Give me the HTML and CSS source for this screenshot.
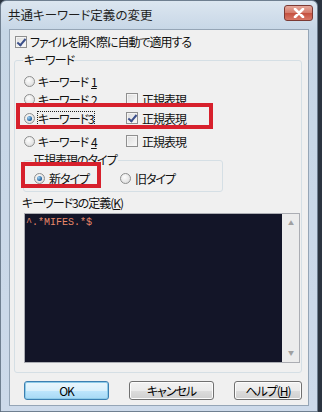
FILE: index.html
```html
<!DOCTYPE html>
<html lang="ja">
<head>
  <meta charset="UTF-8" />
  <title>共通キーワード定義の変更</title>
  <link rel="stylesheet" href="styles.css">
</head>
<body>
  <div class="window">
    <div class="titlebar">
      <span class="title">共通キーワード定義の変更</span>
      <span class="close-btn">
        <svg width="12" height="10" viewBox="0 0 12 10"><path d="M2 1 L10 9 M10 1 L2 9" stroke="#fff" stroke-width="2.6" stroke-linecap="round"/></svg>
      </span>
    </div>

    <div class="client">
      <label class="check-row">
        <span class="checkbox checked"></span>ファイルを開く際に自動で適用する
      </label>

      <fieldset class="group kw-group">
        <legend>キーワード</legend>

        <div class="kw-rows">
          <div class="kw-row">
            <span class="radio-item"><span class="radio"></span>キーワード<u>1</u></span>
          </div>
          <div class="kw-row">
            <span class="radio-item"><span class="radio"></span>キーワード<u>2</u></span>
            <span class="check-item"><span class="checkbox"></span>正規表現</span>
          </div>
          <div class="kw-row row3">
            <span class="radio-item"><span class="radio on"></span><span class="focus">キーワード<u>3</u></span></span>
            <span class="check-item"><span class="checkbox checked"></span>正規表現</span>
            <span class="mark mark-row"></span>
          </div>
          <div class="kw-row row4">
            <span class="radio-item"><span class="radio"></span>キーワード<u>4</u></span>
            <span class="check-item"><span class="checkbox"></span>正規表現</span>
          </div>
        </div>

        <fieldset class="group type-group">
          <legend>正規表現のタイプ</legend>
          <div class="type-row">
            <span class="radio-item new-type"><span class="radio on"></span>新タイプ<span class="mark mark-type"></span></span>
            <span class="radio-item old-type"><span class="radio"></span>旧タイプ</span>
          </div>
        </fieldset>

        <div class="def-label">キーワード3の定義(<u>K</u>)</div>
        <div class="editbox">
          <div class="edit-text">^.*MIFES.*$</div>
          <div class="scrollbar">
            <span class="arrow">&#9650;</span>
            <span class="arrow">&#9660;</span>
          </div>
        </div>
      </fieldset>

      <div class="buttons">
        <button class="btn btn-default">OK</button>
        <button class="btn">キャンセル</button>
        <button class="btn btn-help">ヘルプ(<u>H</u>)</button>
      </div>
    </div>
  </div>
</body>
</html>
```

FILE: styles.css
```css
* {
  box-sizing: border-box;
  margin: 0;
  padding: 0;
}

html, body {
  width: 322px;
  height: 412px;
  overflow: hidden;
  background: #2b3440;
}

body {
  font-family: "Noto Sans CJK JP", sans-serif;
  font-size: 12px;
  font-feature-settings: "palt";
  color: #000;
}

u {
  text-decoration: underline;
  text-underline-offset: 1px;
}

/* window frame */
.window {
  width: 318px;
  height: 412px;
  padding: 0 8px 5px 8px;
  background: linear-gradient(#dce6f0, #c6d6e6 30px, #cddaea);
  border: 1px solid #6f7f90;
  border-radius: 6px 6px 0 0;
  display: flex;
  flex-direction: column;
}

.titlebar {
  height: 28px;
  display: flex;
  align-items: center;
  justify-content: space-between;
}

.title {
  font-size: 12.5px;
  color: #1e1e1e;
  margin-left: -1px;
  margin-top: -1px;
}

.close-btn {
  width: 29px;
  height: 16px;
  margin-right: -4px;
  margin-top: -4px;
  border: 1px solid #7b3a34;
  border-radius: 3px;
  background: linear-gradient(#e6a99c, #d47a6a 50%, #c4503f 51%, #d87766);
  display: flex;
  align-items: center;
  justify-content: center;
}

.client {
  flex: 1;
  background: #f0f0f0;
  border: 1px solid #95a5b6;
  padding: 5px 0 0 4px;
  letter-spacing: -1px;
  color: #111;
}

/* checkbox / radio */
.checkbox {
  display: inline-block;
  width: 12px;
  height: 12px;
  border: 1px solid #8f8f8f;
  background: linear-gradient(135deg, #dcdcdc, #fafafa);
  box-shadow: inset 0 0 0 1px #f4f4f4;
  position: relative;
  flex-shrink: 0;
}

.checkbox.checked::after {
  content: "";
  position: absolute;
  left: 3px;
  top: 0px;
  width: 3px;
  height: 7px;
  border: solid #3b4f8a;
  border-width: 0 2px 2px 0;
  transform: rotate(40deg);
}

.radio {
  display: inline-block;
  width: 11px;
  height: 11px;
  border-radius: 50%;
  border: 1px solid #8e8f8f;
  background: radial-gradient(circle at 40% 35%, #fdfdfd, #d6d6d6);
  position: relative;
  flex-shrink: 0;
}

.radio.on::after {
  content: "";
  position: absolute;
  left: 2px;
  top: 2px;
  width: 5px;
  height: 5px;
  border-radius: 50%;
  background: radial-gradient(circle at 35% 35%, #9fd3f5, #1d5c9a 70%, #0d3a6c);
}

.check-row {
  display: flex;
  align-items: center;
  gap: 3px;
  height: 13px;
  line-height: 13px;
  margin-left: 1px;
}

/* group boxes */
.group {
  border: 1px solid #d5dfe5;
  border-radius: 3px;
}

.group legend {
  padding: 0 1px;
  line-height: 14px;
  height: 14px;
}

.kw-group {
  margin-top: 5px;
  width: 288px;
  height: 320px;
  padding: 0 0 0 8px;
}

.kw-rows {
  margin-top: 6px;
  display: flex;
  flex-direction: column;
  gap: 2px;
}

.kw-row {
  height: 16px;
  display: flex;
  align-items: center;
  position: relative;
}

.row3 {
  margin-top: 1px;
}

.row4 {
  margin-top: 5px;
}

.radio-item {
  display: flex;
  align-items: center;
  gap: 3px;
  width: 102px;
  margin-left: 1px;
  position: relative;
}

.check-item {
  display: flex;
  align-items: center;
  gap: 4px;
}

.focus {
  outline: 1px dotted #222;
  outline-offset: 0;
  line-height: 13px;
}

/* red annotation boxes */
.mark {
  position: absolute;
  border: 4px solid #d7202c;
}

.mark-row {
  left: -7px;
  top: -7px;
  width: 197px;
  height: 26px;
}

.mark-type {
  left: -13px;
  top: -8px;
  width: 80px;
  height: 26px;
}

.type-group {
  width: 192px;
  margin-top: 4px;
  padding: 0 0 5px 8px;
}

.type-row {
  margin-top: 3px;
  height: 16px;
  display: flex;
  align-items: center;
}

.type-row .new-type {
  width: 85px;
  margin-left: 2px;
  gap: 4px;
}

.type-row .old-type {
  gap: 4px;
}

.def-label {
  margin-top: 4px;
  height: 14px;
  line-height: 14px;
  margin-left: -1px;
}

.editbox {
  margin-top: 3px;
  margin-left: 1px;
  width: 276px;
  height: 150px;
  border: 1px solid #abadb3;
  display: flex;
}

.edit-text {
  flex: 1;
  background: #131528;
  color: #e8886a;
  font-family: "Liberation Mono", monospace;
  font-size: 10px;
  letter-spacing: 0;
  line-height: 14px;
  padding: 2px 1px;
}

.scrollbar {
  width: 17px;
  background: #ececec;
  display: flex;
  flex-direction: column;
  justify-content: space-between;
  align-items: center;
  padding: 5px 0 5px;
}

.arrow {
  font-size: 6px;
  color: #a0a0a0;
  line-height: 8px;
}

/* buttons */
.buttons {
  margin-top: 8px;
  margin-left: 10px;
  display: flex;
  gap: 20px;
}

.btn {
  width: 85px;
  height: 19px;
  border: 1px solid #707070;
  border-radius: 3px;
  background: linear-gradient(#f2f2f2, #ebebeb 50%, #dddddd 51%, #cfcfcf);
  box-shadow: inset 0 0 0 1px #fcfcfc;
  font-family: "Noto Sans CJK JP", sans-serif;
  font-size: 12px;
  font-feature-settings: "palt";
  letter-spacing: -1px;
  line-height: 16px;
  color: #000;
}

.btn-default {
  border-color: #3c7fb1;
  background: linear-gradient(#eaf6fd, #d9f0fc 50%, #bee6fd 51%, #a7d9f5);
  box-shadow: inset 0 0 0 1px #8ecbe8;
}

.btn-help {
  width: 68px;
}
```
